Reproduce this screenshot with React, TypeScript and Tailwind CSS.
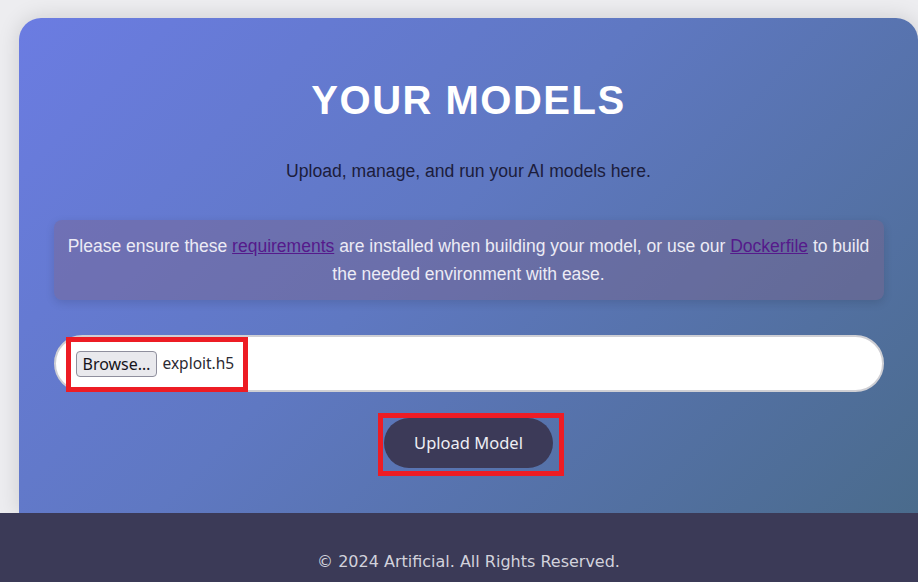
export default function App() {
  return (
    <div className="flex min-h-screen flex-col bg-[#ededf0]" style={{ fontFamily: '"Liberation Sans", Arial, sans-serif' }}>
      <main className="pl-[19px] pt-[18px]">
        <section className="flex h-[495px] w-[899px] flex-col items-center rounded-t-[22px] bg-[linear-gradient(135deg,#6b7ce2_0%,#5f78c2_45%,#4a6b8c_100%)] px-[35px] pt-[59px] shadow-[0_0_22px_rgba(0,0,0,0.14)]">
          <h1 className="text-[40px] font-bold leading-[46px] tracking-[1.5px] text-white">YOUR MODELS</h1>
          <p className="mt-[36px] text-[17.6px] leading-[24px] text-[#1c1d3c]">
            Upload, manage, and run your AI models here.
          </p>

          <div className="mt-[37px] w-[830px] rounded-[8px] bg-[rgba(123,100,140,0.43)] px-[8px] py-[12px] text-center text-[17.5px] leading-[28px] text-[#ecebf5] shadow-[0_3px_10px_rgba(0,0,0,0.12)]">
            Please ensure these{' '}
            <a href="#" className="text-[#551a8b] underline">requirements</a>{' '}
            are installed when building your model, or use our{' '}
            <a href="#" className="text-[#551a8b] underline">Dockerfile</a>{' '}
            to build the needed environment with ease.
          </div>

          <div className="relative mt-[35px] flex h-[57px] w-[830px] items-center rounded-full border-2 border-[#cfcfd4] bg-white pl-[20px]" style={{ fontFamily: '"Noto Sans", sans-serif' }}>
            <span className="flex h-[26px] items-center rounded-[4px] border border-[#8f8f9d] bg-[#e9e9ed] px-[6px] text-[16px] text-[#15141a]">
              Browse…
            </span>
            <span className="ml-[5px] text-[15.5px] text-[#2b2a33]">exploit.h5</span>
            <div className="absolute left-[10px] top-[0px] h-[55px] w-[182px] border-[5px] border-[#ed1c24]" />
          </div>

          <div className="ml-[5px] mt-[21px] flex h-[63px] w-[186px] items-start border-[5px] border-[#ed1c24] pl-[1px]">
            <button className="h-[50px] w-[169px] rounded-full bg-[#3c3a58] text-[16.5px] text-[#eeeef4]" style={{ fontFamily: '"Noto Sans", sans-serif' }}>
              Upload Model
            </button>
          </div>
        </section>
      </main>

      <footer className="flex-1 bg-[#3b3a57] pl-[19px] pt-[39px] pb-[20px] text-center text-[16px] leading-[20px] text-[#d2d2dc]" style={{ fontFamily: '"DejaVu Sans", sans-serif' }}>
        © 2024 Artificial. All Rights Reserved.
      </footer>
    </div>
  );
}
